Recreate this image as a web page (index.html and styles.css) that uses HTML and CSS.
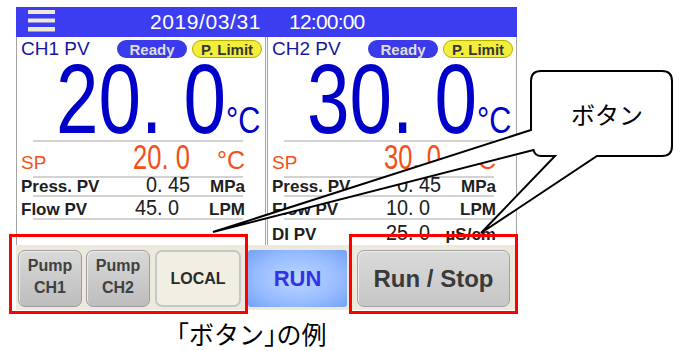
FILE: index.html
```html
<!DOCTYPE html>
<html lang="ja">
<head>
<meta charset="utf-8">
<title>ボタンの例</title>
<link rel="stylesheet" href="styles.css">
</head>
<body>
<div class="page">
  <div class="screen">
    <div class="topbar">
      <svg class="menu" width="27" height="30" viewBox="0 0 27 30">
        <rect x="0" y="3" width="27" height="4" fill="#efe8d2"/>
        <rect x="0" y="11.5" width="27" height="4" fill="#efe8d2"/>
        <rect x="0" y="20" width="27" height="4.5" fill="#efe8d2"/>
      </svg>
      <span class="date">2019/03/31</span>
      <span class="time">12:00:00</span>
    </div>
    <div class="panels">
      <section class="panel">
        <div class="head">
          <span class="label">CH1 PV</span>
          <span class="badge ready">Ready</span>
          <span class="badge limit">P. Limit</span>
        </div>
        <div class="big"><span class="big-num">20. 0</span><span class="big-unit">°C</span></div>
        <div class="rule"></div>
        <div class="row sp"><span class="name">SP</span><span class="val">20. 0</span><span class="unit">°C</span></div>
        <div class="rule"></div>
        <div class="row press"><span class="name">Press. PV</span><span class="val">0. 45</span><span class="unit">MPa</span></div>
        <div class="rule"></div>
        <div class="row flow"><span class="name">Flow PV</span><span class="val one">45. 0</span><span class="unit">LPM</span></div>
        <div class="rule"></div>
      </section>
      <section class="panel">
        <div class="head">
          <span class="label">CH2 PV</span>
          <span class="badge ready">Ready</span>
          <span class="badge limit">P. Limit</span>
        </div>
        <div class="big"><span class="big-num">30. 0</span><span class="big-unit">°C</span></div>
        <div class="rule"></div>
        <div class="row sp"><span class="name">SP</span><span class="val">30. 0</span><span class="unit">°C</span></div>
        <div class="rule"></div>
        <div class="row press"><span class="name">Press. PV</span><span class="val">0. 45</span><span class="unit">MPa</span></div>
        <div class="rule"></div>
        <div class="row flow"><span class="name">Flow PV</span><span class="val one">10. 0</span><span class="unit">LPM</span></div>
        <div class="rule"></div>
        <div class="row di"><span class="name">DI PV</span><span class="val one">25. 0</span><span class="unit">µS/cm</span></div>
      </section>
    </div>
    <div class="bar">
      <div class="btn pump ch1">Pump<br>CH1</div>
      <div class="btn pump ch2">Pump<br>CH2</div>
      <div class="btn local">LOCAL</div>
      <div class="btn run">RUN</div>
      <div class="btn runstop">Run / Stop</div>
    </div>
  </div>
  <p class="caption">「ボタン<span class="half">」</span>の例</p>
  <svg class="annot" width="681" height="351" viewBox="0 0 681 351">
    <rect x="10.5" y="235.5" width="236" height="77" fill="none" stroke="#ff0000" stroke-width="3"/>
    <rect x="350.5" y="235.5" width="166" height="77" fill="none" stroke="#ff0000" stroke-width="3"/>
    <path d="M541 71 H662 Q672 71 672 81 V146 Q672 156 662 156 H597 L481 233 L555 156 H541 Q535 156 533.5 150 L213 232 L531 130 V81 Q531 71 541 71 Z" fill="#ffffff" stroke="#000000" stroke-width="2"/>
    <text class="bubble-text" x="607" y="124" text-anchor="middle">ボタン</text>
  </svg>
</div>
</body>
</html>
```

FILE: styles.css
```css
body {
  margin: 0;
  background: #ffffff;
  font-family: "Liberation Sans", Arial, sans-serif;
}

.page {
  position: relative;
  width: 681px;
  height: 351px;
  overflow: hidden;
}

.screen {
  margin: 7px 0 0 16px;
  width: 501px;
}

/* header */
.topbar {
  height: 30px;
  background: #3c3cf0;
  display: flex;
  align-items: center;
  color: #ffffff;
  font-size: 21px;
}

.menu {
  margin-left: 12px;
  flex: none;
}

.date {
  margin-left: 95px;
  letter-spacing: 0.6px;
}

.time {
  margin-left: 28px;
  letter-spacing: -0.8px;
}

/* panels */
.panels {
  display: flex;
  gap: 1px;
  height: 208px;
}

.panel {
  width: 250px;
  box-sizing: border-box;
  border-left: 1px solid #a4a4a4;
  border-right: 1px solid #a4a4a4;
  display: flex;
  flex-direction: column;
  background: #ffffff;
}

.head {
  height: 22px;
  box-sizing: border-box;
  padding: 2px 3px 0 4px;
  display: flex;
  align-items: center;
}

.label {
  flex: 1;
  font-size: 19px;
  color: #1616a0;
}

.badge {
  width: 70px;
  height: 18px;
  box-sizing: border-box;
  border-radius: 9px;
  margin-left: 5px;
  font-size: 15px;
  font-weight: bold;
  display: flex;
  align-items: center;
  justify-content: center;
}

.ready {
  background: #3a3aea;
  color: #dedede;
}

.limit {
  background: #f2ef3c;
  border: 1px solid #b8b000;
  color: #363636;
}

.big {
  height: 81px;
  display: flex;
  justify-content: flex-end;
  align-items: baseline;
  padding-right: 5px;
  line-height: 81px;
  color: #0000c8;
}

.big-num {
  display: inline-block;
  font-size: 98px;
  margin-right: -6px;
  transform: scaleX(0.78);
  transform-origin: right center;
  white-space: pre;
}

.big-unit {
  display: inline-block;
  font-size: 36px;
  line-height: 36px;
  transform: scaleX(0.85);
  transform-origin: right center;
}

.rule {
  height: 2px;
  background: #d2d2d2;
  margin: 0 22px 0 16px;
  flex: none;
}

.row {
  display: grid;
  grid-template-columns: 1fr auto 55px;
  align-items: baseline;
  padding: 0 20px 0 4px;
  color: #202020;
  flex: none;
}

.name {
  font-size: 17px;
  font-weight: bold;
}

.val {
  display: inline-block;
  font-size: 22px;
  transform: scaleX(0.9);
  transform-origin: right center;
  white-space: pre;
}

.val.one {
  margin-right: 11px;
}

.unit {
  text-align: right;
  font-size: 17px;
  font-weight: bold;
}

.sp {
  height: 34px;
  line-height: 29px;
  color: #f25018;
}

.sp .name {
  font-size: 19px;
  font-weight: normal;
}

.sp .val {
  font-size: 35px;
  transform: scaleX(0.73);
}

.sp .unit {
  font-size: 25px;
  font-weight: normal;
}

.press {
  height: 17px;
  line-height: 14px;
}

.flow {
  height: 21px;
  line-height: 21px;
}

.di {
  height: 25px;
  line-height: 25px;
}

/* button bar */
.bar {
  height: 65px;
  box-sizing: border-box;
  padding: 5px 0 0 2px;
  background: #ede9dc;
  display: flex;
  align-items: flex-start;
}

.btn {
  height: 57px;
  box-sizing: border-box;
  border-radius: 7px;
  font-weight: bold;
  display: flex;
  align-items: center;
  justify-content: center;
  text-align: center;
  flex: none;
}

.pump {
  width: 64px;
  font-size: 16px;
  line-height: 22px;
  padding-bottom: 4px;
  color: #404040;
  background: linear-gradient(#d9d9d9, #bdbdbd);
  border: 1px solid #9e9e9e;
  box-shadow: inset 1px 1px 0 #ececec;
}

.ch1 {
  margin-right: 4px;
}

.ch2 {
  margin-right: 5px;
}

.local {
  width: 86px;
  margin-right: 7px;
  font-size: 16px;
  color: #2a2a2a;
  background: #f1eee3;
  border: 2px solid #c6c6c2;
}

.run {
  width: 99px;
  margin-right: 10px;
  border-radius: 3px;
  font-size: 22px;
  color: #3232e6;
  background: radial-gradient(ellipse 70% 70% at 50% 50%, #bcd6ff 0%, #98bcff 60%, #74a2f6 100%);
}

.runstop {
  width: 153px;
  font-size: 24px;
  color: #3a3a3a;
  background: linear-gradient(#dadada, #c6c6c6);
  border: 1px solid #a2a2a2;
  box-shadow: inset 1px 1px 0 #ededed;
}

/* caption */
.caption {
  margin: 8px 0 0 164px;
  font-family: "Noto Sans CJK JP", "Noto Sans CJK SC", sans-serif;
  font-size: 25px;
  line-height: 30px;
  color: #000000;
}

.half {
  font-feature-settings: "halt";
}

/* annotation overlay */
.annot {
  position: absolute;
  left: 0;
  top: 0;
  pointer-events: none;
}

.bubble-text {
  font-family: "Noto Sans CJK JP", "Noto Sans CJK SC", sans-serif;
  font-size: 24px;
  fill: #000000;
}
```
